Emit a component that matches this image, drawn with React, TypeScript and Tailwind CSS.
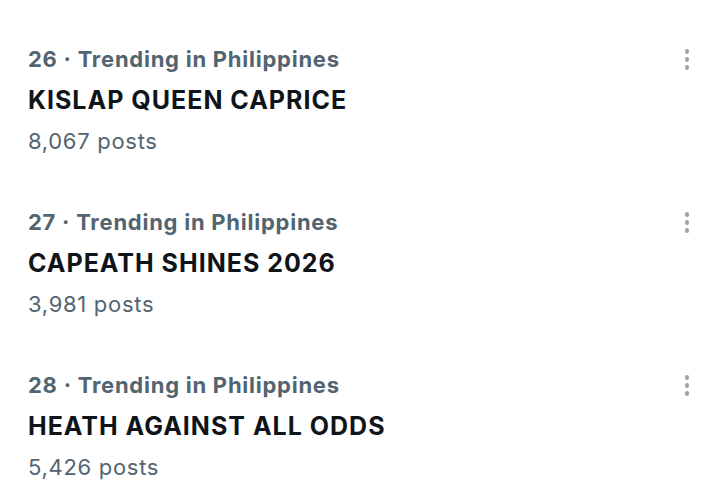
const trends = [
  { rank: 26, title: "KISLAP QUEEN CAPRICE", posts: "8,067" },
  { rank: 27, title: "CAPEATH SHINES 2026", posts: "3,981" },
  { rank: 28, title: "HEATH AGAINST ALL ODDS", posts: "5,426" },
];

function MoreIcon() {
  return (
    <div className="flex flex-col items-center gap-[3.5px]">
      <span className="block w-[4.5px] h-[4.5px] rounded-full bg-[#9aa4ad]" />
      <span className="block w-[4.5px] h-[4.5px] rounded-full bg-[#9aa4ad]" />
      <span className="block w-[4.5px] h-[4.5px] rounded-full bg-[#9aa4ad]" />
    </div>
  );
}

export default function App() {
  return (
    <div className="w-[720px] h-[497px] bg-white overflow-hidden pt-[19px] font-['Inter',sans-serif]">
      {trends.map((t) => (
        <div key={t.rank} className="flex pl-[28px] pr-[31px] py-[20px]">
          <div className="flex-1 leading-[41px]">
            <div className="text-[22px] font-bold tracking-[0.75px] text-[#536471]">
              {t.rank} · Trending in Philippines
            </div>
            <div className="text-[25px] font-bold tracking-[1px] text-[#0f1419]">{t.title}</div>
            <div className="text-[22px] tracking-[0.7px] text-[#536471]">{t.posts} posts</div>
          </div>
          <div className="h-[41px] flex items-center">
            <MoreIcon />
          </div>
        </div>
      ))}
    </div>
  );
}
